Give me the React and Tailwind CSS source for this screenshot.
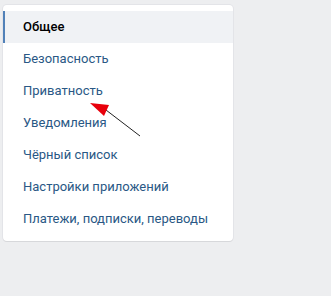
import React from 'react'

const items = [
  'Общее',
  'Безопасность',
  'Приватность',
  'Уведомления',
  'Чёрный список',
  'Настройки приложений',
  'Платежи, подписки, переводы',
]

const MenuItem = ({ label, active }) => (
  <div
    className={`h-8 flex items-center pl-[18px] border-l-2 text-[13px] ${
      active
        ? 'bg-[#f0f2f5] border-[#5181b8] text-black font-medium'
        : 'border-transparent text-[#2a5885]'
    }`}
  >
    {label}
  </div>
)

const App = () => {
  return (
    <div
      className="w-[331px] h-[296px] bg-[#edeef0] relative"
      style={{ fontFamily: 'Roboto, "Open Sans", sans-serif' }}
    >
      <div className="pt-[5px] pl-[3px]">
        <div className="w-[230px] bg-white rounded-[4px] shadow-[0_1px_0_0_#d7d8db,0_0_0_1px_#e3e4e8] py-[6px]">
          {items.map((label, i) => (
            <MenuItem key={label} label={label} active={i === 0} />
          ))}
        </div>
      </div>

      {/* annotation arrow */}
      <svg
        className="absolute left-0 top-0 pointer-events-none"
        width="331"
        height="296"
      >
        <line x1="140" y1="136" x2="106" y2="110" stroke="#222" strokeWidth="1" />
        <polygon points="90,103 109,105 104,116" fill="#e8000b" />
      </svg>
    </div>
  )
}

export default App
